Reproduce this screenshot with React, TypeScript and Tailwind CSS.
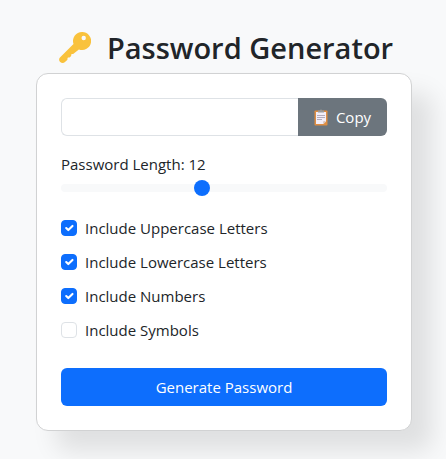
import { useState } from "react";

const CHARSETS = [
  { id: "upper", label: "Include Uppercase Letters", chars: "ABCDEFGHIJKLMNOPQRSTUVWXYZ", on: true },
  { id: "lower", label: "Include Lowercase Letters", chars: "abcdefghijklmnopqrstuvwxyz", on: true },
  { id: "numbers", label: "Include Numbers", chars: "0123456789", on: true },
  { id: "symbols", label: "Include Symbols", chars: "!@#$%^&*()_+-=[]{}", on: false },
];

function KeyIcon() {
  return (
    <svg viewBox="0 0 32 32" className="size-8 shrink-0" aria-hidden="true">
      <path
        fill="#f9c23c"
        fillRule="evenodd"
        d="M23 0a9 9 0 0 0-8.500 12.000L1.200 25.200a3.300 3.300 0 0 0 0 4.900c1.400 1.300 3.500 1.300 4.800 0l2.200-2.200c.4-.4.300-.8.300-1.300 0-.6.500-1 1-1 .5 0 1 .1 1.400-.3l1-1c.4-.4.3-.8.3-1.300 0-.5.4-1 1-1 .5 0 .9.100 1.300-.3l5.400-4.300A9 9 0 1 0 23 0Zm1.700 3.800a2.200 2.200 0 1 1 0 4.400 2.200 2.200 0 0 1 0-4.400Z"
      />
    </svg>
  );
}

function ClipboardIcon() {
  return (
    <svg viewBox="0 0 14 17" className="h-[17px] w-[14px] shrink-0" aria-hidden="true">
      <rect x="0.500" y="1.500" width="13" height="15" rx="0.800" fill="#df8e42" />
      <path fill="#f3eef8" d="M2 3h10v9.500L9.500 15H2Z" />
      <path fill="#d3b9a9" d="M12 12.300 9.300 15v-2.700Z" />
      <path fill="#9b9b9b" d="M4 1.500h2a1 1 0 0 1 2 0h2v2H4Z" />
      <path stroke="#b4acbc" strokeWidth="1" d="M3 6.500h8M3 8.500h8M3 10.500h5" />
    </svg>
  );
}

export default function App() {
  const [length, setLength] = useState(12);
  const [enabled, setEnabled] = useState(CHARSETS.map((set) => set.on));
  const [password, setPassword] = useState("");

  const generate = () => {
    const pool = CHARSETS.filter((_, i) => enabled[i]).map((set) => set.chars).join("");
    setPassword(
      pool ? Array.from({ length }, () => pool[Math.floor(Math.random() * pool.length)]).join("") : "",
    );
  };

  return (
    <main className="min-h-screen bg-[#f8f9fa] pt-7 pr-[34px] pb-7 pl-9 font-['Open_Sans','Noto_Sans',sans-serif] text-[15px] leading-6 text-[#212529]">
      <div className="mx-auto max-w-[376px]">
        <h1 className="mb-[5px] flex items-center justify-center gap-4 pl-1 text-[29px] leading-10 font-semibold whitespace-nowrap">
          <KeyIcon />
          Password Generator
        </h1>

        <section className="rounded-xl border border-[#d1d2d3] bg-white p-6 shadow-[20px_20px_25px_rgba(0,0,0,0.1)]">
          <div className="mb-4 flex h-[38px]">
            <input
              type="text"
              readOnly
              value={password}
              aria-label="Generated password"
              className="min-w-0 flex-1 rounded-l-md border border-r-0 border-[#dee2e6] bg-white px-3 outline-none"
            />
            <button
              type="button"
              onClick={() => navigator.clipboard?.writeText(password)}
              className="flex w-[89px] items-center justify-center gap-2 rounded-r-md bg-[#6c757d] text-white"
            >
              <ClipboardIcon />
              Copy
            </button>
          </div>

          <label htmlFor="length" className="block">
            Password Length: {length}
          </label>
          <input
            id="length"
            type="range"
            min={6}
            max={20}
            value={length}
            onChange={(e) => setLength(Number(e.target.value))}
            className="mb-4 block h-6 w-full appearance-none bg-transparent [&::-webkit-slider-runnable-track]:h-2 [&::-webkit-slider-runnable-track]:rounded-full [&::-webkit-slider-runnable-track]:bg-[#f8f9fa] [&::-webkit-slider-thumb]:-mt-1 [&::-webkit-slider-thumb]:size-4 [&::-webkit-slider-thumb]:appearance-none [&::-webkit-slider-thumb]:rounded-full [&::-webkit-slider-thumb]:bg-[#0d6efd]"
          />

          <div className="mb-[26px] flex flex-col gap-2.5">
            {CHARSETS.map((set, i) => (
              <label key={set.id} htmlFor={set.id} className="flex items-center gap-2">
                <span className="grid size-4 shrink-0">
                  <input
                    id={set.id}
                    type="checkbox"
                    checked={enabled[i]}
                    onChange={() => setEnabled(enabled.map((v, j) => (j === i ? !v : v)))}
                    className="peer col-start-1 row-start-1 size-4 appearance-none rounded border border-[#dee2e6] bg-white checked:border-[#0d6efd] checked:bg-[#0d6efd]"
                  />
                  <svg
                    viewBox="0 0 20 20"
                    className="pointer-events-none invisible col-start-1 row-start-1 m-px size-3.5 peer-checked:visible"
                    aria-hidden="true"
                  >
                    <path
                      fill="none"
                      stroke="#fff"
                      strokeLinecap="round"
                      strokeLinejoin="round"
                      strokeWidth="3"
                      d="m6 10 3 3 6-6"
                    />
                  </svg>
                </span>
                {set.label}
              </label>
            ))}
          </div>

          <button
            type="button"
            onClick={generate}
            className="block h-[38px] w-full rounded-md bg-[#0d6efd] text-white"
          >
            Generate Password
          </button>
        </section>
      </div>
    </main>
  );
}
